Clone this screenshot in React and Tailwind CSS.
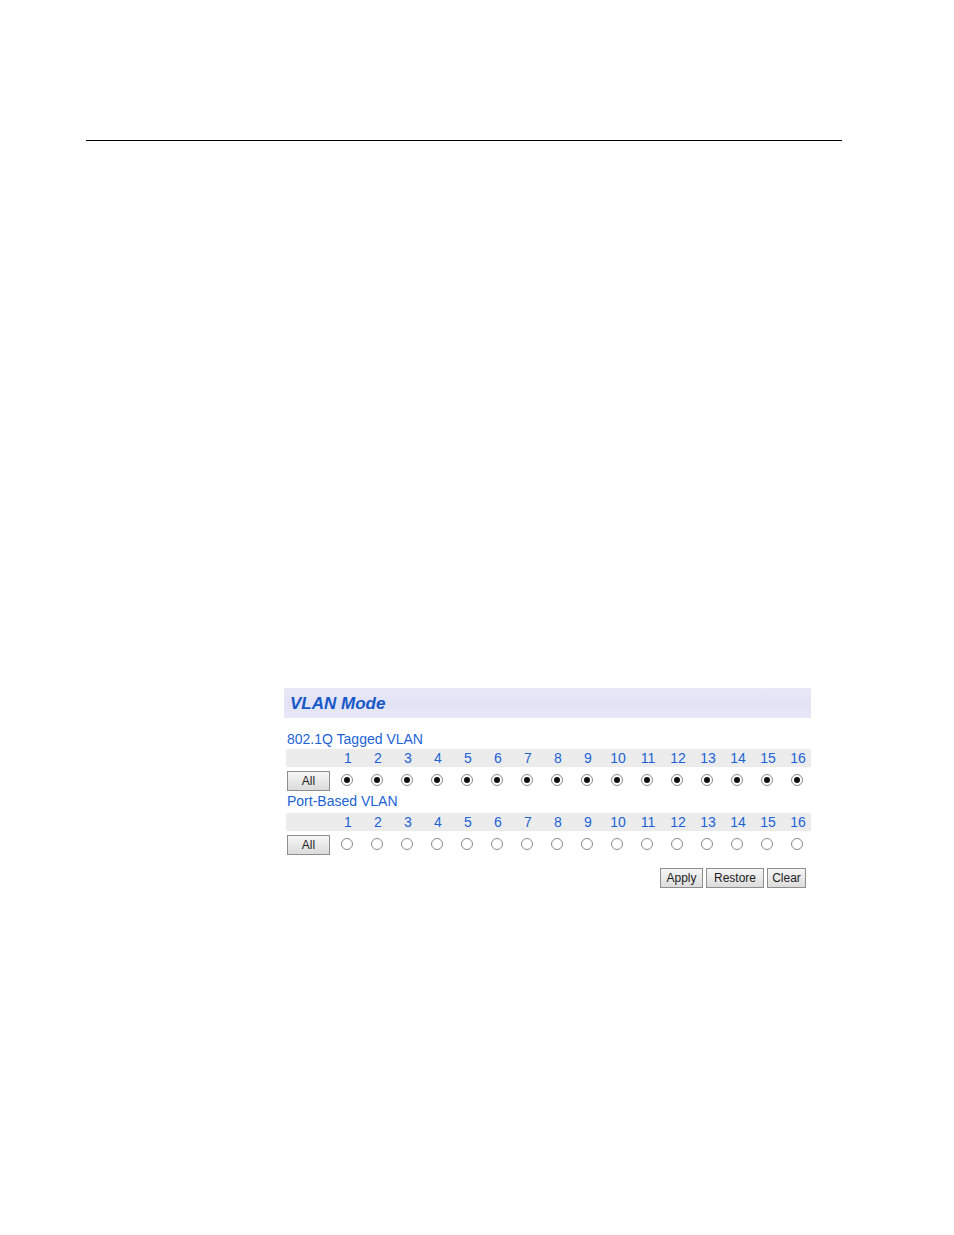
import React from "react";

const ports = Array.from({ length: 16 }, (_, i) => i + 1);

const Radio = ({ checked }) => (
  <span className="w-[12px] h-[12px] rounded-full border border-[#8a8a8a] bg-white grid place-items-center">
    {checked && <span className="w-[6px] h-[6px] rounded-full bg-[#111]" />}
  </span>
);

const Btn = ({ text, className = "" }) => (
  <button
    className={`h-[20px] border border-[#8e8e8e] bg-gradient-to-b from-[#f6f6f6] to-[#dcdcdc] text-[12px] text-[#222] leading-none ${className}`}
  >
    {text}
  </button>
);

const PortBlock = ({ label, checked, gap }) => (
  <div className="flex flex-col">
    <div className="h-[17px] flex items-center pl-[3px] text-[14px] text-[#1b63d6]">{label}</div>
    <div className={`grid grid-cols-[48px_repeat(16,30px)] bg-[#ececec] h-[18px] ${gap} ml-[2px] items-center`}>
      <div />
      {ports.map((p) => (
        <div key={p} className="text-center text-[14px] text-[#1b63d6] leading-none -ml-[2px]">
          {p}
        </div>
      ))}
    </div>
    <div className="grid grid-cols-[48px_repeat(16,30px)] h-[26px] items-center">
      <div className="pl-[3px]">
        <Btn text="All" className="w-[43px]" />
      </div>
      {ports.map((p) => (
        <div key={p} className="flex justify-center">
          <Radio checked={checked} />
        </div>
      ))}
    </div>
  </div>
);

export default function App() {
  return (
    <div className="w-[954px] h-[1235px] bg-white font-['Liberation_Sans',Arial,sans-serif] relative">
      <div className="pt-[140px] pl-[86px]">
        <div className="w-[756px] h-px bg-black" />
      </div>

      <div className="ml-[284px] mt-[547px] w-[527px]">
        <div className="h-[30px] bg-gradient-to-b from-[#e9eaf8] via-[#e1e3f5] to-[#e8e9f7] flex items-center pl-[6px]">
          <span className="text-[17px] font-bold italic text-[#1758c8] pt-[2px]">VLAN Mode</span>
        </div>

        <div className="mt-[13px]">
          <PortBlock label="802.1Q Tagged VLAN" checked gap="mt-[1px]" />
          <PortBlock label="Port-Based VLAN" checked={false} gap="mt-[3px]" />
        </div>

        <div className="flex justify-end gap-[3px] mt-[11px] pr-[5px]">
          <Btn text="Apply" className="w-[43px]" />
          <Btn text="Restore" className="w-[58px]" />
          <Btn text="Clear" className="w-[39px]" />
        </div>
      </div>
    </div>
  );
}
